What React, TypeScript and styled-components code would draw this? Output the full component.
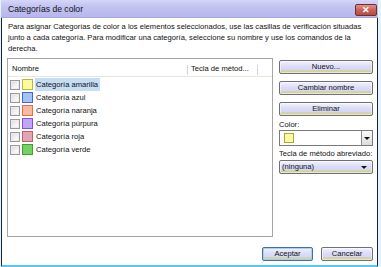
import React from 'react';
import styled, { createGlobalStyle } from 'styled-components';

const Global = createGlobalStyle`
  html, body { margin: 0; padding: 0; background: #fff; }
  body { font-family: "Liberation Sans", Arial, sans-serif; color: #000; }
`;

const Screen = styled.div`
  width: 381px;
  height: 267px;
  overflow: hidden;
  background: #dff4fb;
  display: flex;
`;

const Window = styled.div`
  margin-left: 1px;
  width: 377px;
  height: 267px;
  display: flex;
  flex-direction: column;
  background: #fff;
`;

const TitleBar = styled.div`
  height: 18px;
  flex: none;
  display: flex;
  justify-content: space-between;
  align-items: flex-start;
  padding: 0 1px 0 7px;
  background: linear-gradient(to bottom, #d6d6f7 0%, #c4c4f1 35%, #b6b6ec 100%);
  border-bottom: 1px solid #a9a9de;
  box-sizing: border-box;
`;

const Title = styled.span`
  font-size: 8.6px;
  line-height: 18px;
  color: #101020;
`;

const CloseButton = styled.div`
  margin-top: 4px;
  width: 22px;
  height: 12px;
  box-sizing: border-box;
  border: 1px solid #6e2e2e;
  border-radius: 2px;
  background: linear-gradient(to bottom, #e0928a 0%, #c9625a 50%, #b84a44 100%);
  display: flex;
  align-items: center;
  justify-content: center;
  color: #fff;
  font-size: 9px;
  font-weight: bold;
  line-height: 10px;
`;

const Body = styled.div`
  flex: 1;
  display: flex;
  flex-direction: column;
  border-left: 1px solid #1e2238;
  border-right: 1px solid #1e2238;
  border-bottom: 2px solid #56c8f0;
  padding: 3px 4px 0 5px;
  box-sizing: border-box;
`;

const Description = styled.div`
  height: 33px;
  padding-left: 1px;
  font-size: 7.6px;
  line-height: 11px;
  color: #111;
  white-space: nowrap;
`;

const Main = styled.div`
  margin-top: 4px;
  display: flex;
  align-items: flex-start;
  gap: 6px;
`;

const ListBox = styled.div`
  width: 266px;
  height: 179px;
  box-sizing: border-box;
  border: 1px solid #a5a5a5;
  display: flex;
  flex-direction: column;
`;

const Header = styled.div`
  height: 18px;
  flex: none;
  display: flex;
  box-sizing: border-box;
  border-bottom: 1px solid #e6e6dc;
`;

const HeaderCell = styled.div<{ $w: number; $pad: number }>`
  position: relative;
  width: ${(p) => p.$w}px;
  padding: 3px 0 0 ${(p) => p.$pad}px;
  box-sizing: border-box;
  font-size: 7.6px;
  line-height: 14px;
  color: #111;
  white-space: nowrap;
  &::after {
    content: '';
    position: absolute;
    right: 0;
    top: 6px;
    width: 1px;
    height: 10px;
    background: #d4d4e0;
  }
`;

const Rows = styled.div`
  padding-top: 1px;
  display: flex;
  flex-direction: column;
`;

const Row = styled.div`
  height: 13px;
  display: flex;
  align-items: center;
  padding-left: 2px;
`;

const Check = styled.div`
  width: 10px;
  height: 10px;
  box-sizing: border-box;
  border: 1px solid #9a9a9a;
  background: linear-gradient(135deg, #d8d8d8 0%, #f4f4f4 60%, #ffffff 100%);
  box-shadow: inset 0 0 0 1px #ececec;
`;

const Swatch = styled.div<{ $fill: string; $edge: string }>`
  margin-left: 2px;
  width: 11px;
  height: 11px;
  box-sizing: border-box;
  border: 1px solid ${(p) => p.$edge};
  background: ${(p) => p.$fill};
`;

const RowLabel = styled.span<{ $selected?: boolean }>`
  margin-left: 2px;
  padding: 0 2px 0 1px;
  height: 13px;
  line-height: 13px;
  font-size: 7.6px;
  color: #111;
  white-space: nowrap;
  background: ${(p) => (p.$selected ? '#c6ddf6' : 'transparent')};
`;

const Side = styled.div`
  width: 94px;
  padding-top: 2px;
  display: flex;
  flex-direction: column;
`;

const Button = styled.div<{ $default?: boolean; $w?: number }>`
  height: 14px;
  ${(p) => (p.$w ? `width: ${p.$w}px;` : '')}
  box-sizing: border-box;
  border: 1px solid ${(p) => (p.$default ? '#3d6fa8' : '#707070')};
  border-radius: 2px;
  background: linear-gradient(to bottom, #f2f2fe 0%, #dcdcf8 45%, #d6d6f6 72%, #d3d3a6 80%, #cfcf9c 100%);
  box-shadow: inset 0 0 0 1px ${(p) => (p.$default ? '#a8d0f0' : 'rgba(255,255,255,0.5)')};
  font-size: 7.6px;
  line-height: 12px;
  text-align: center;
  color: #111;
  white-space: nowrap;
`;

const SideButton = styled(Button)`
  margin-bottom: 7px;
`;

const FieldLabel = styled.div<{ $top: number }>`
  margin-top: ${(p) => p.$top}px;
  font-size: 7.6px;
  line-height: 11px;
  color: #111;
  white-space: nowrap;
`;

const ColorCombo = styled.div`
  height: 16px;
  box-sizing: border-box;
  border: 1px solid #7a7a7a;
  background: #fff;
  display: flex;
  align-items: center;
  padding-left: 4px;
`;

const ComboSwatch = styled.div`
  width: 10px;
  height: 10px;
  box-sizing: border-box;
  border: 1px solid #a9a93a;
  background: #fbfb9c;
`;

const DropButton = styled.div`
  margin-left: auto;
  width: 11px;
  height: 14px;
  box-sizing: border-box;
  border-left: 1px solid #8a8a8a;
  background: linear-gradient(to bottom, #fafafa, #dcdcdc);
  display: flex;
  align-items: center;
  justify-content: center;
`;

const Arrow = styled.div`
  width: 0;
  height: 0;
  border-left: 3px solid transparent;
  border-right: 3px solid transparent;
  border-top: 3px solid #111;
`;

const SelectBox = styled(Button)`
  margin-top: 1px;
  display: flex;
  align-items: center;
  justify-content: space-between;
  text-align: left;
  padding: 0 5px 0 2px;
`;

const Footer = styled.div`
  margin-top: 10px;
  display: flex;
  justify-content: flex-end;
  gap: 8px;
`;

const categories = [
  { name: 'Categoría amarilla', fill: '#fbfb9c', edge: '#b8b845', selected: true },
  { name: 'Categoría azul', fill: '#a4c2f6', edge: '#3d6ccc' },
  { name: 'Categoría naranja', fill: '#f8b9a2', edge: '#e0703e' },
  { name: 'Categoría púrpura', fill: '#c3a4f6', edge: '#8452d6' },
  { name: 'Categoría roja', fill: '#e3a3b0', edge: '#c0606e' },
  { name: 'Categoría verde', fill: '#74d264', edge: '#3fa030' },
];

export default function App() {
  return (
    <>
      <Global />
      <Screen>
        <Window>
          <TitleBar>
            <Title>Categorías de color</Title>
            <CloseButton>✕</CloseButton>
          </TitleBar>
          <Body>
            <Description>
              Para asignar Categorías de color a los elementos seleccionados, use las casillas de verificación situadas
              <br />
              junto a cada categoría. Para modificar una categoría, seleccione su nombre y use los comandos de la
              <br />
              derecha.
            </Description>
            <Main>
              <ListBox>
                <Header>
                  <HeaderCell $w={180} $pad={4}>Nombre</HeaderCell>
                  <HeaderCell $w={70} $pad={3}>Tecla de métod...</HeaderCell>
                </Header>
                <Rows>
                  {categories.map((c) => (
                    <Row key={c.name}>
                      <Check />
                      <Swatch $fill={c.fill} $edge={c.edge} />
                      <RowLabel $selected={c.selected}>{c.name}</RowLabel>
                    </Row>
                  ))}
                </Rows>
              </ListBox>
              <Side>
                <SideButton>Nuevo...</SideButton>
                <SideButton>Cambiar nombre</SideButton>
                <Button>Eliminar</Button>
                <FieldLabel $top={3}>Color:</FieldLabel>
                <ColorCombo>
                  <ComboSwatch />
                  <DropButton>
                    <Arrow />
                  </DropButton>
                </ColorCombo>
                <FieldLabel $top={2}>Tecla de método abreviado:</FieldLabel>
                <SelectBox>
                  <span>(ninguna)</span>
                  <Arrow />
                </SelectBox>
              </Side>
            </Main>
            <Footer>
              <Button $default $w={51}>Aceptar</Button>
              <Button $w={52}>Cancelar</Button>
            </Footer>
          </Body>
        </Window>
      </Screen>
    </>
  );
}
